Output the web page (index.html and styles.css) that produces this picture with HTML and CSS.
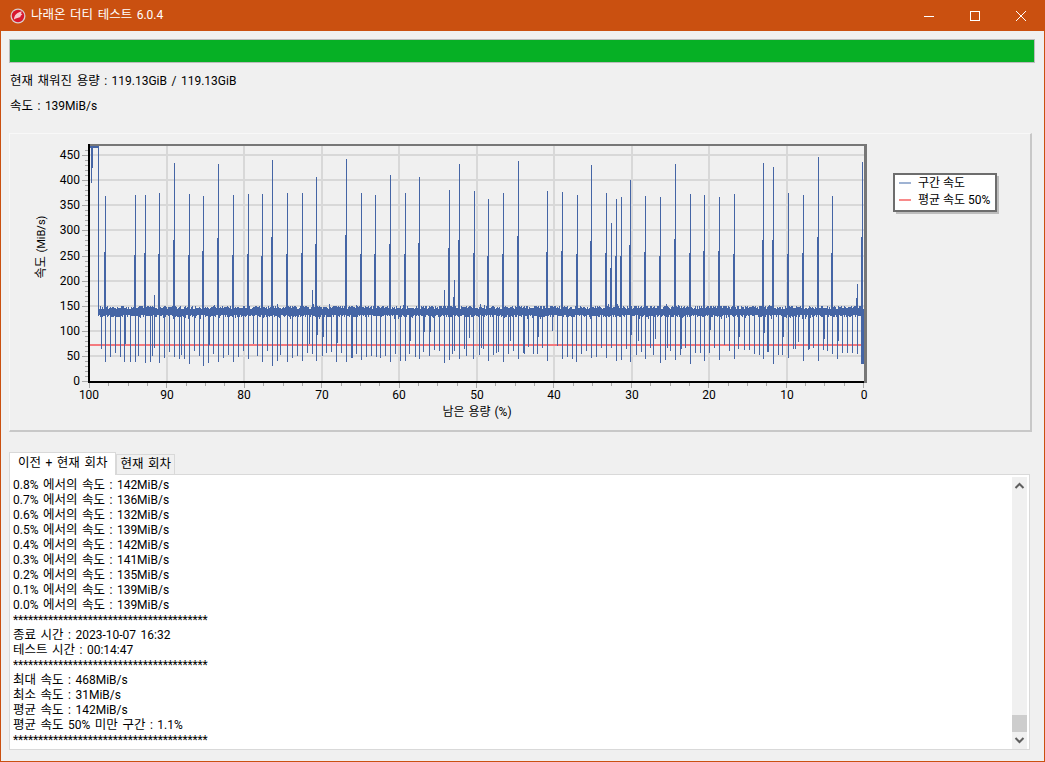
FILE: index.html
```html
<!DOCTYPE html>
<html lang="ko">
<head>
<meta charset="utf-8">
<title>나래온 더티 테스트 6.0.4</title>
<link rel="stylesheet" href="styles.css">
</head>
<body>
<div class="window">
  <header class="titlebar">
    <svg class="app-icon" width="16" height="16" viewBox="0 0 16 16">
      <circle cx="8" cy="8" r="7.5" fill="#d9cfcf"/>
      <circle cx="8" cy="8" r="6.2" fill="#d8182e"/>
      <path d="M4 11.5C4 7.5 7 4 12 3.5C10.5 5.5 11 6 12.5 6C11 7.5 10 8 10.5 9C8.5 9.5 6.5 10 4 11.5Z" fill="#f7c9cc"/>
    </svg>
    <span class="title"><span class="ko">나래온 더티 테스트</span> 6.0.4</span>
    <div class="controls">
      <span class="control"><svg width="10" height="10" viewBox="0 0 10 10"><path d="M0 5.5H10" stroke="#fff" fill="none"/></svg></span>
      <span class="control"><svg width="10" height="10" viewBox="0 0 10 10"><rect x=".5" y=".5" width="9" height="9" stroke="#fff" fill="none"/></svg></span>
      <span class="control"><svg width="10" height="10" viewBox="0 0 10 10"><path d="M0 0L10 10M10 0L0 10" stroke="#fff" fill="none"/></svg></span>
    </div>
  </header>
  <main class="content">
    <div class="progress"></div>
    <p class="status status-first"><span class="ko">현재 채워진 용량</span> : 119.13GiB / 119.13GiB</p>
    <p class="status"><span class="ko">속도</span> : 139MiB/s</p>
    <section class="chart-panel">
      <svg id="chart" class="chart" width="1020" height="296" viewBox="10 134 1020 296">
        <path id="grid" class="grid"/>
        <path id="minor" class="minor"/>
        <path class="avg" d="M89 345H865"/>
        <path id="series" class="series"/>
        <path class="frame-top" d="M88 145H866"/>
        <path class="frame-right" d="M865.5 144V383"/>
        <path class="frame-dark" d="M89 144V382H864"/>
        <g id="ylabels" class="tick-y"></g>
        <g id="xlabels" class="tick-x"></g>
        <text class="axis-title" x="477" y="416" text-anchor="middle"><tspan class="ko">남은 용량</tspan> (%)</text>
        <text class="axis-title axis-title-y" transform="translate(45 247) rotate(-90)" text-anchor="middle"><tspan class="ko">속도</tspan> (MiB/s)</text>
        <rect class="legend-shadow" x="896" y="176" width="103" height="38"/>
        <rect class="legend-box" x="894" y="174" width="102" height="37"/>
        <path class="legend-blue" d="M899 183H911"/>
        <path class="legend-red" d="M899 200H911"/>
        <text class="legend-text" x="918" y="187"><tspan class="ko">구간 속도</tspan></text>
        <text class="legend-text" x="918" y="204"><tspan class="ko">평균 속도</tspan> 50%</text>
      </svg>
    </section>
    <div class="tabs">
      <span class="tab tab-active"><span class="ko">이전</span> + <span class="ko">현재 회차</span></span>
      <span class="tab"><span class="ko">현재 회차</span></span>
    </div>
    <div class="log-box">
      <div class="log">
        <div class="line">0.8% <span class="ko">에서의 속도</span> : 142MiB/s</div>
        <div class="line">0.7% <span class="ko">에서의 속도</span> : 136MiB/s</div>
        <div class="line">0.6% <span class="ko">에서의 속도</span> : 132MiB/s</div>
        <div class="line">0.5% <span class="ko">에서의 속도</span> : 139MiB/s</div>
        <div class="line">0.4% <span class="ko">에서의 속도</span> : 142MiB/s</div>
        <div class="line">0.3% <span class="ko">에서의 속도</span> : 141MiB/s</div>
        <div class="line">0.2% <span class="ko">에서의 속도</span> : 135MiB/s</div>
        <div class="line">0.1% <span class="ko">에서의 속도</span> : 139MiB/s</div>
        <div class="line">0.0% <span class="ko">에서의 속도</span> : 139MiB/s</div>
        <div class="line stars">***************************************</div>
        <div class="line"><span class="ko">종료 시간</span> : 2023-10-07 16:32</div>
        <div class="line"><span class="ko">테스트 시간</span> : 00:14:47</div>
        <div class="line stars">***************************************</div>
        <div class="line"><span class="ko">최대 속도</span> : 468MiB/s</div>
        <div class="line"><span class="ko">최소 속도</span> : 31MiB/s</div>
        <div class="line"><span class="ko">평균 속도</span> : 142MiB/s</div>
        <div class="line"><span class="ko">평균 속도</span> 50% <span class="ko">미만 구간</span> : 1.1%</div>
        <div class="line stars">***************************************</div>
      </div>
      <div class="scrollbar">
        <svg class="arrow" width="15" height="17" viewBox="0 0 15 17"><path d="M3.5 11L7.5 7L11.5 11" fill="none" stroke="#5f5f5f" stroke-width="2"/></svg>
        <div class="track"><div class="thumb"></div></div>
        <svg class="arrow" width="15" height="17" viewBox="0 0 15 17"><path d="M3.5 6L7.5 10L11.5 6" fill="none" stroke="#5f5f5f" stroke-width="2"/></svg>
      </div>
    </div>
  </main>
</div>
<script src="app.js"></script>
</body>
</html>
```
FILE: styles.css
```css
* { box-sizing: border-box; }
html, body { margin: 0; height: 100%; }
body { overflow: hidden; background: #f0f0f0; }
.window {
  width: 1045px; height: 762px;
  display: flex; flex-direction: column;
  border: 1px solid #ca5010; border-top: 0;
  background: #f0f0f0; color: #000;
  font: 12px/15px Roboto, "Noto Sans CJK KR", sans-serif;
  word-spacing: 1.5px;
}
.ko { font-size: 12.5px; line-height: 1; }
.titlebar {
  height: 31px; flex: none;
  display: flex; align-items: center;
  background: #ca5010; color: #fff;
  padding-left: 9px;
}
.app-icon { flex: none; }
.title { margin-left: 5px; }
.controls { margin-left: auto; display: flex; }
.control { width: 46px; height: 31px; display: flex; align-items: center; justify-content: center; }
.content { flex: 1; display: flex; flex-direction: column; padding: 8px 9px 0 8px; }
.progress { height: 24px; background: #06b025; border: 1px solid #bcbcbc; }
.status { margin: 10px 0 0 1px; height: 15px; }
.status-first { margin-top: 11px; }
.chart-panel {
  margin-top: 19px; width: 1023px; height: 299px;
  border: 2px solid #c8c8c8;
  border-top: 1px solid #f8f8f8; border-left: 1px solid #f8f8f8;
}
.chart { display: block; font-family: Roboto, "Noto Sans CJK KR", sans-serif; font-size: 12px; word-spacing: 0; }
.chart .ko { font-size: 12px; }
.grid { stroke: #d8d8d8; stroke-width: 2; fill: none; }
.minor { stroke: #a8a8a8; fill: none; shape-rendering: crispEdges; }
.series { stroke: #4565a5; stroke-width: 1; fill: none; shape-rendering: crispEdges; }
.avg { stroke: #f47a7e; stroke-width: 2; fill: none; }
.frame-top { stroke: #777; stroke-width: 2; fill: none; }
.frame-right { stroke: #777; stroke-width: 3; fill: none; }
.frame-dark { stroke: #000; stroke-width: 2; fill: none; }
.tick-y text { text-anchor: end; }
.tick-x text { text-anchor: middle; }
.axis-title { fill: #000; word-spacing: 1px; }
.axis-title-y { font-size: 11px; }
.legend-shadow { fill: #bdbdbd; }
.legend-box { fill: #fff; stroke: #6d6d6d; stroke-width: 2; }
.legend-blue { stroke: #9fb3d3; stroke-width: 2; }
.legend-red { stroke: #f88a8a; stroke-width: 2; }
.tabs { margin-top: 19px; height: 23px; display: flex; align-items: flex-end; }
.tab {
  height: 20px; padding: 0 3px 0 3px; margin-bottom: 0;
  border: 1px solid #d9d9d9; border-bottom: 0;
  background: #f0f0f0; white-space: nowrap;
  display: flex; align-items: center;
}
.tab-active {
  display: block; line-height: 20px;
  height: 23px; margin-bottom: -1px; padding: 0 8px 2px 8px;
  background: #fff; position: relative; z-index: 1;
}
.log-box {
  width: 1021px; height: 276px;
  display: flex; background: #fff;
  border: 1px solid #d9d9d9;
  padding: 2px 2px 0 3px;
}
.log { flex: 1; overflow: hidden; padding-top: 1px; }
.line { height: 15px; white-space: nowrap; }
.stars { letter-spacing: -.18px; }
.scrollbar { width: 15px; flex: none; display: flex; flex-direction: column; background: #f0f0f0; }
.arrow { display: block; flex: none; }
.track { flex: 1; display: flex; flex-direction: column; justify-content: flex-end; }
.thumb { height: 17px; background: #cdcdcd; }
```
FILE: app.js
```js
// Page coordinates are used throughout: the SVG viewBox matches the window.
(function () {
var up = [[105,168,336],[135,165,345],[145,165,339],[159,159,342],[174,69,300],[189,162,345],[203,168,333],[218,72,294],[233,165,345],[248,162,342],[262,162,348],[272,60,291],[287,159,342],[302,159,339],[316,111,312],[346,57,285],[361,159,342],[375,165,342],[390,105,312],[405,159,342],[419,111,309],[449,150,324],[459,72,300],[474,153,339],[488,177,348],[503,159,342],[518,63,288],[547,153,336],[562,156,333],[577,165,342],[591,75,303],[606,159,339],[611,249,384],[616,177,348],[621,171,348],[630,120,315],[645,168,336],[660,171,348],[675,72,297],[690,162,339],[704,165,333],[719,171,333],[734,162,342],[763,69,300],[773,81,300],[788,159,342],[803,165,339],[818,51,291],[832,168,339],[862,66,291]];
var small = [[154,465],[312,450],[444,450],[454,420],[453,470],[857,432],[856,474]];
var down = [[101,627],[105,666],[110,651],[115,639],[120,651],[124,666],[125,612],[130,666],[135,666],[138,648],[145,669],[150,666],[152,648],[154,624],[159,669],[164,654],[169,636],[174,651],[179,657],[181,645],[184,657],[189,672],[194,633],[199,648],[203,678],[208,669],[209,615],[213,642],[218,666],[223,654],[228,645],[233,666],[238,651],[243,633],[248,657],[253,612],[257,648],[262,666],[267,633],[272,678],[277,663],[280,645],[287,666],[292,654],[297,648],[302,663],[307,639],[309,612],[312,642],[316,663],[317,585],[322,648],[323,591],[326,639],[331,636],[336,666],[337,609],[341,639],[346,666],[352,588],[351,654],[352,654],[356,642],[361,660],[366,651],[371,648],[376,651],[380,654],[385,648],[390,666],[395,642],[400,663],[405,663],[409,642],[410,603],[415,651],[419,657],[423,636],[424,576],[429,648],[430,576],[434,630],[439,633],[444,669],[449,660],[452,642],[454,633],[459,657],[464,627],[466,648],[469,594],[473,657],[479,645],[481,624],[483,627],[488,663],[493,645],[496,639],[498,636],[503,666],[508,642],[510,603],[513,633],[518,657],[523,639],[524,642],[528,621],[533,642],[537,642],[538,591],[542,624],[547,663],[552,573],[557,618],[562,657],[567,651],[572,657],[576,666],[581,642],[586,633],[591,654],[596,597],[596,651],[601,624],[606,654],[611,624],[616,663],[621,660],[626,627],[630,666],[631,585],[636,645],[638,603],[641,636],[641,567],[645,657],[650,624],[653,645],[655,597],[660,669],[665,660],[667,624],[670,633],[675,660],[680,645],[681,627],[685,624],[690,672],[695,639],[700,639],[704,663],[709,639],[710,570],[714,624],[719,660],[724,615],[729,633],[734,657],[738,627],[739,591],[744,630],[749,630],[754,642],[759,645],[763,657],[764,579],[767,636],[768,636],[773,672],[778,645],[782,645],[783,591],[788,654],[793,627],[795,627],[798,606],[803,663],[808,630],[809,627],[813,624],[818,663],[823,630],[824,597],[827,633],[832,642],[837,657],[838,603],[842,639],[847,639],[852,639],[857,642],[861,672],[862,672],[863,672],[864,570]];

function toY(v) { return 140 + v / 3; }

// Deterministic pseudo-random sequence, so the trace is the same on every load.
var seed = 12345;
function rnd() {
  seed = (seed * 1664525 + 1013904223) % 4294967296;
  return seed / 4294967296;
}

var d = [];
function col(x, y1, y2) { d.push("M" + (x + 0.5) + " " + Math.round(y1) + "V" + Math.round(y2)); }

// Saturated start of the run
col(90, 146, 148); col(91, 146, toY(129)); col(92, 146, toY(84));
var x;
for (x = 93; x < 98; x++) col(x, 146, 148);
col(98, 146, 316);

// Noise band around 140 MiB/s
for (x = 98; x <= 864; x++) {
  var hi = 305.5 + rnd() * 3.5, lo = 314.5 + rnd() * 3;
  if (rnd() < 0.05) hi -= 2;
  if (rnd() < 0.07) lo += 2;
  col(x, hi, lo);
}
up.forEach(function (s) {
  col(s[0], toY(s[1]), 310);
  col(s[0] - 1, toY(s[2]), 310);
});
small.forEach(function (s) { col(s[0], toY(s[1]), 310); });
down.forEach(function (s) { col(s[0], 312, toY(s[1])); });
document.getElementById("series").setAttribute("d", d.join(""));

// Grid lines
var xs = [89, 167, 244, 322, 399, 477, 554, 632, 709, 787, 864];
var g = [], m = [], i;
for (i = 1; i <= 9; i++) {
  g.push("M89 " + Math.round(381 - i * 25.1) + "H865");
  g.push("M" + xs[i] + " 146V381");
}
document.getElementById("grid").setAttribute("d", g.join(""));

// Minor ticks
for (i = 0; i <= 40; i++) {
  var tx = Math.round(89 + i * 19.35) + 0.5;
  m.push("M" + tx + " 383V" + (i % 4 === 0 ? 388 : 386));
}
for (i = 0; i <= 46; i++) {
  var ty = Math.round(381 - i * 5.02) + 0.5;
  m.push("M" + (i % 5 === 0 ? 82 : 85) + " " + ty + "H88");
}
document.getElementById("minor").setAttribute("d", m.join(""));

// Axis labels
var NS = "http://www.w3.org/2000/svg";
function label(parent, lx, ly, s) {
  var t = document.createElementNS(NS, "text");
  t.setAttribute("x", lx); t.setAttribute("y", ly); t.textContent = s;
  document.getElementById(parent).appendChild(t);
}
for (i = 0; i <= 9; i++) label("ylabels", 80, Math.round(381 - i * 25.1) + 4, String(i * 50));
for (i = 0; i <= 10; i++) label("xlabels", xs[i], 399, String(100 - i * 10));
})();
```
